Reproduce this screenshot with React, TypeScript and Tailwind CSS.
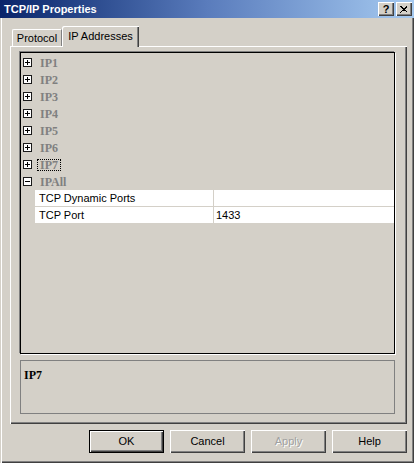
import React from "react";

const ipNames = ["IP1", "IP2", "IP3", "IP4", "IP5", "IP6", "IP7"];

const raised = "shadow-[inset_1px_1px_#ffffff,inset_-1px_-1px_#404040,inset_-2px_-2px_#808080]";

const Expander = ({ open }: { open?: boolean }) => (
    <span className="flex h-[9px] w-[9px] items-center justify-center border border-[#1a1a1a] bg-white">
        <svg width="7" height="7" viewBox="0 0 7 7" shapeRendering="crispEdges">
            <path d="M1 3.5h5" stroke="#000" strokeWidth="1" />
            {!open && <path d="M3.5 1v5" stroke="#000" strokeWidth="1" />}
        </svg>
    </span>
);

const TreeNode = ({ label, open, focused }: { label: string; open?: boolean; focused?: boolean }) => (
    <div className="flex h-[17px] items-center pl-[2px]">
        <Expander open={open} />
        <span
            className={`ml-[5px] flex h-[12px] items-center border border-dotted pl-[2px] pr-[2px] font-['Liberation_Serif',serif] text-[12px] font-bold text-[#808080] ${
                focused ? "border-black" : "border-transparent"
            }`}
        >
            {label}
        </span>
    </div>
);

const PropertyRow = ({ name, value }: { name: string; value: string }) => (
    <div className="ml-[14px] flex h-[17px] border-b border-[#d4d0c8] bg-white text-[11px] leading-[16px] text-black">
        <div className="w-[179px] border-r border-[#d4d0c8] pl-[4px]">{name}</div>
        <div className="flex-1 pl-[2px]">{value}</div>
    </div>
);

const DialogButton = ({ label, isDefault, disabled }: { label: string; isDefault?: boolean; disabled?: boolean }) => (
    <div
        className={`flex h-[23px] w-[75px] items-center justify-center text-[11px] ${
            isDefault
                ? "border border-black shadow-[inset_1px_1px_#ffffff,inset_-1px_-1px_#404040,inset_-2px_-2px_#808080]"
                : raised
        } ${disabled ? "text-[#a0a0a0] [text-shadow:1px_1px_#ffffff]" : "text-black"}`}
    >
        {label}
    </div>
);

export default function App() {
    return (
        <div className="flex h-[463px] w-[414px] flex-col bg-[#d4d0c8] font-['Liberation_Sans',Arial,sans-serif] shadow-[inset_1px_0_#d4d0c8,inset_2px_0_#ffffff,inset_-1px_-1px_#404040,inset_-2px_-2px_#808080]">
            {/* title bar */}
            <div className="flex h-[18px] items-center justify-between bg-gradient-to-r from-[#0a246a] via-[#5a7cbc] to-[#a6caf0] pl-[4px] pr-[2px]">
                <span className="text-[11px] font-bold text-white">TCP/IP Properties</span>
                <div className="flex gap-[2px]">
                    <div className={`flex h-[14px] w-[16px] items-center justify-center bg-[#d4d0c8] text-[11px] font-bold leading-none text-black ${raised}`}>
                        ?
                    </div>
                    <div className={`flex h-[14px] w-[16px] items-center justify-center bg-[#d4d0c8] ${raised}`}>
                        <svg width="8" height="7" viewBox="0 0 8 7" shapeRendering="crispEdges">
                            <path d="M0.5 0.5l7 6M1.5 0.5l6 6M7.5 0.5l-7 6M6.5 0.5l-6 6" stroke="#000" strokeWidth="1" />
                        </svg>
                    </div>
                </div>
            </div>

            {/* tabs */}
            <div className="ml-[12px] mt-[8px] flex h-[20px] items-end text-[11px] text-black">
                <div className="flex h-[17px] w-[50px] items-center justify-center rounded-tl-[2px] border-l border-t border-r border-l-white border-t-white border-r-[#808080]">
                    Protocol
                </div>
                <div className="relative z-10 -mb-px flex h-[21px] w-[77px] items-center justify-center rounded-tl-[2px] bg-[#d4d0c8] pb-[1px] shadow-[inset_1px_1px_#ffffff,inset_-1px_0_#404040,inset_-2px_0_#808080]">
                    IP Addresses
                </div>
            </div>

            {/* tab panel */}
            <div className={`ml-[10px] flex h-[378px] w-[397px] flex-col pl-[10px] pt-[6px] ${raised}`}>
                <div className="h-[302px] w-[375px] border border-black bg-[#d4d0c8] pt-[1px] shadow-[-1px_-1px_#808080,1px_1px_#ffffff]">
                    {ipNames.map((ip) => (
                        <TreeNode key={ip} label={ip} focused={ip === "IP7"} />
                    ))}
                    <TreeNode label="IPAll" open />
                    <PropertyRow name="TCP Dynamic Ports" value="" />
                    <PropertyRow name="TCP Port" value="1433" />
                </div>
                <div className="mt-[6px] h-[54px] w-[375px] border border-[#808080] px-[3px] pt-[1px]">
                    <span className="font-['Liberation_Serif',serif] text-[12px] font-bold text-black">IP7</span>
                </div>
            </div>

            {/* buttons */}
            <div className="mt-[6px] flex justify-end gap-[6px] pr-[7px]">
                <DialogButton label="OK" isDefault />
                <DialogButton label="Cancel" />
                <DialogButton label="Apply" disabled />
                <DialogButton label="Help" />
            </div>
        </div>
    );
}
